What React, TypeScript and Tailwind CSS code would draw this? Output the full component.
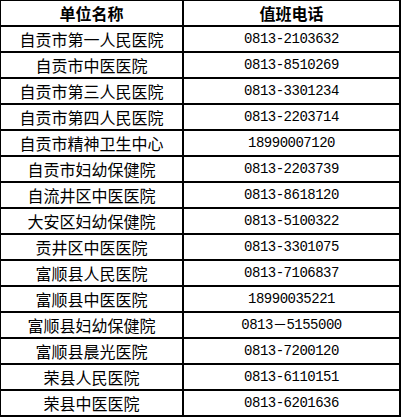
import React from "react";

const rows: [string, string][] = [
  ["自贡市第一人民医院", "0813-2103632"],
  ["自贡市中医医院", "0813-8510269"],
  ["自贡市第三人民医院", "0813-3301234"],
  ["自贡市第四人民医院", "0813-2203714"],
  ["自贡市精神卫生中心", "18990007120"],
  ["自贡市妇幼保健院", "0813-2203739"],
  ["自流井区中医医院", "0813-8618120"],
  ["大安区妇幼保健院", "0813-5100322"],
  ["贡井区中医医院", "0813-3301075"],
  ["富顺县人民医院", "0813-7106837"],
  ["富顺县中医医院", "18990035221"],
  ["富顺县妇幼保健院", "0813－5155000"],
  ["富顺县晨光医院", "0813-7200120"],
  ["荣县人民医院", "0813-6110151"],
  ["荣县中医医院", "0813-6201636"],
];

export default function App() {
  return (
    <div className="w-[401px] bg-white text-black border-t border-l border-black font-['Noto_Sans_CJK_SC',sans-serif]">
      <div className="flex h-[26px] border-b-2 border-black">
        <div className="w-[183px] border-r-2 border-black flex items-center justify-center text-[16px] font-bold leading-none">
          单位名称
        </div>
        <div className="w-[217px] border-r-2 border-black flex items-center justify-center text-[16px] font-bold leading-none">
          值班电话
        </div>
      </div>
      {rows.map(([name, tel]) => (
        <div key={name} className="flex h-[26px] border-b-2 border-black">
          <div className="w-[183px] border-r-2 border-black flex items-center justify-center text-[16px] leading-none">
            {name}
          </div>
          <div className="w-[217px] border-r-2 border-black flex items-center justify-center text-[14px] tracking-[-0.5px] leading-none font-['Liberation_Mono','Noto_Sans_CJK_SC',monospace]">
            {tel}
          </div>
        </div>
      ))}
    </div>
  );
}
